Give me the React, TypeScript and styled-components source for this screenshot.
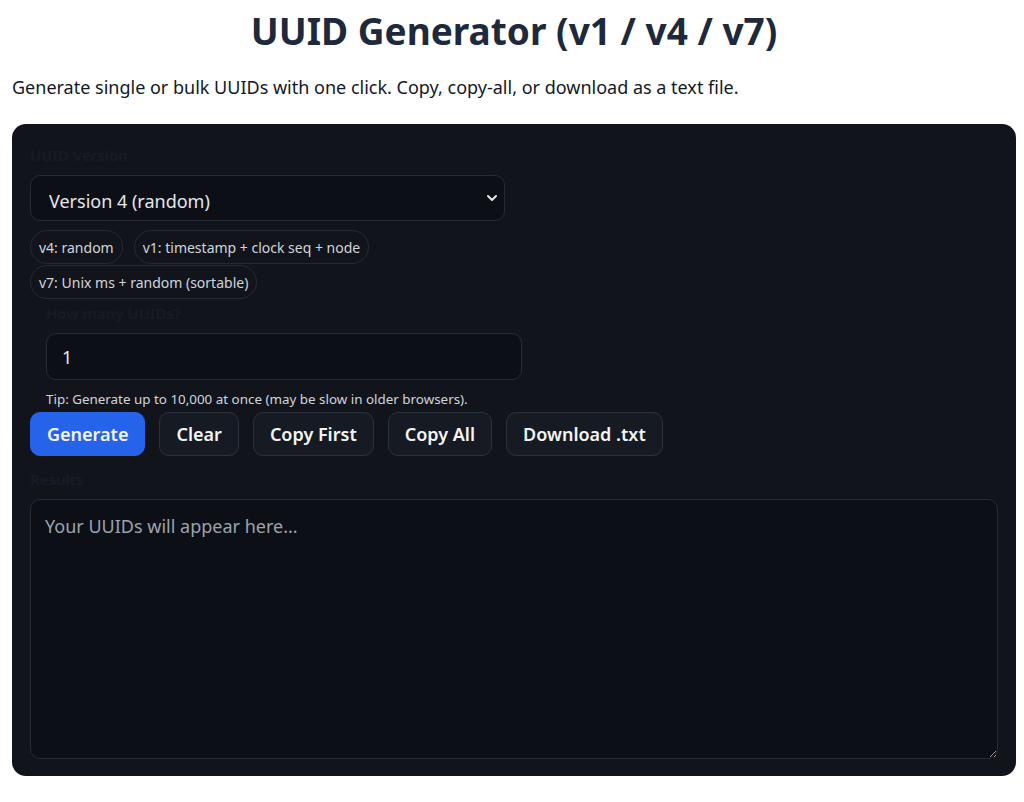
import React from "react";
import styled, { createGlobalStyle } from "styled-components";

const Global = createGlobalStyle`
  html, body { margin: 0; padding: 0; background: #ffffff; }
  body { font-family: "Noto Sans", "Open Sans", sans-serif; color: #1f2937; }
  * { box-sizing: border-box; }
`;

const Page = styled.div`
  padding: 0 8px 26px 12px;
  display: flex;
  flex-direction: column;
`;

const Title = styled.h1`
  margin: 9px 0 0;
  text-align: center;
  font-size: 37px;
  font-weight: 700;
  line-height: 44px;
  color: #1e293b;
`;

const Subtitle = styled.p`
  margin: 22px 0 25px;
  font-size: 18px;
  line-height: 24px;
  color: #111827;
`;

const Card = styled.section`
  background: #11151b;
  border-radius: 14px;
  padding: 21px 18px 17px 18px;
  display: flex;
  flex-direction: column;
  width: 1004px;
`;

const Label = styled.label<{ $indent?: boolean }>`
  display: block;
  font-size: 15px;
  line-height: 20px;
  font-weight: 600;
  color: #161c27;
  margin: 0 0 10px ${(p) => (p.$indent ? "16px" : "0")};
`;

const SelectWrap = styled.div`
  position: relative;
  width: 475px;
`;

const Select = styled.select`
  appearance: none;
  width: 100%;
  height: 46px;
  background: #0c1016;
  border: 1px solid #262c36;
  border-radius: 10px;
  color: #e5e7eb;
  font-family: inherit;
  font-size: 18px;
  padding: 6px 18px 0;
  outline: none;
`;

const Chevron = styled.svg`
  position: absolute;
  right: 7px;
  top: 18px;
  pointer-events: none;
`;

const Chips = styled.div`
  display: flex;
  flex-wrap: wrap;
  gap: 1px 11px;
  margin-top: 9px;
  width: 420px;
`;

const Chip = styled.span`
  display: inline-flex;
  align-items: center;
  height: 34px;
  padding: 0 8px;
  border: 1px solid #242a33;
  border-radius: 17px;
  font-size: 14px;
  color: #d1d5db;
`;

const CountBlock = styled.div`
  display: flex;
  flex-direction: column;
  margin-top: 4px;
`;

const Input = styled.input`
  margin-left: 16px;
  width: 476px;
  height: 47px;
  background: #0c1016;
  border: 1px solid #262c36;
  border-radius: 10px;
  color: #e5e7eb;
  font-family: inherit;
  font-size: 18px;
  padding: 0 15px;
  outline: none;
`;

const Tip = styled.div`
  margin: 10px 0 0 16px;
  font-size: 13.4px;
  line-height: 18px;
  color: #d1d5db;
`;

const Buttons = styled.div`
  display: flex;
  gap: 14px;
  margin-top: 4px;
`;

const Button = styled.button<{ $primary?: boolean }>`
  height: 44px;
  padding: 0 16px;
  border-radius: 10px;
  font-family: inherit;
  font-size: 18px;
  font-weight: 600;
  color: #f3f4f6;
  background: ${(p) => (p.$primary ? "#2563eb" : "#161b23")};
  border: 1px solid ${(p) => (p.$primary ? "#2563eb" : "#2b313b")};
  cursor: pointer;
`;

const ResultsBlock = styled.div`
  display: flex;
  flex-direction: column;
  margin-top: 13px;
`;

const TextArea = styled.textarea`
  width: 100%;
  height: 260px;
  background: #0c1016;
  border: 1px solid #262c36;
  border-radius: 10px;
  color: #e5e7eb;
  font-family: inherit;
  font-size: 18px;
  padding: 14px 14px;
  resize: vertical;
  outline: none;
  &::placeholder { color: #9ca3af; }
`;

export default function App() {
  return (
    <>
      <Global />
      <Page>
        <Title>UUID Generator (v1 / v4 / v7)</Title>
        <Subtitle>
          Generate single or bulk UUIDs with one click. Copy, copy-all, or download as a text file.
        </Subtitle>
        <Card>
          <Label>UUID Version</Label>
          <SelectWrap>
            <Select defaultValue="v4">
              <option value="v4">Version 4 (random)</option>
              <option value="v1">Version 1 (timestamp)</option>
              <option value="v7">Version 7 (Unix ms)</option>
            </Select>
            <Chevron width="12" height="10" viewBox="0 0 12 10">
              <path d="M2 3l4 4 4-4" fill="none" stroke="#e5e7eb" strokeWidth="2" strokeLinecap="round" strokeLinejoin="round" />
            </Chevron>
          </SelectWrap>
          <Chips>
            <Chip>v4: random</Chip>
            <Chip>v1: timestamp + clock seq + node</Chip>
            <Chip>v7: Unix ms + random (sortable)</Chip>
          </Chips>
          <CountBlock>
            <Label $indent>How many UUIDs?</Label>
            <Input type="number" defaultValue={1} />
            <Tip>Tip: Generate up to 10,000 at once (may be slow in older browsers).</Tip>
          </CountBlock>
          <Buttons>
            <Button $primary>Generate</Button>
            <Button>Clear</Button>
            <Button>Copy First</Button>
            <Button>Copy All</Button>
            <Button>Download .txt</Button>
          </Buttons>
          <ResultsBlock>
            <Label>Results</Label>
            <TextArea placeholder="Your UUIDs will appear here..." />
          </ResultsBlock>
        </Card>
      </Page>
    </>
  );
}
